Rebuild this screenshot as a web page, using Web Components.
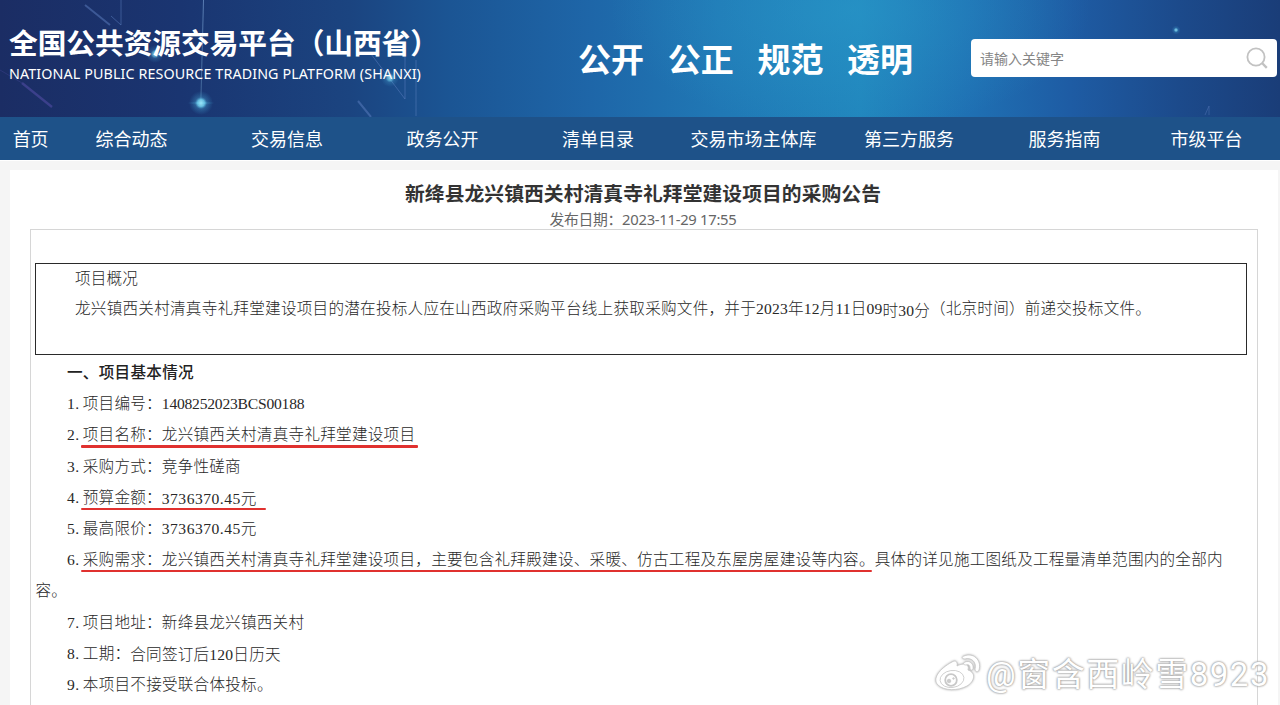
<!DOCTYPE html>
<html lang="zh-CN">
<head>
<meta charset="utf-8">
<title>全国公共资源交易平台（山西省）</title>
<style>
    body {
        margin: 0;
        width: 1280px;
        height: 705px;
        overflow: hidden;
        background: #f5f5f5;
        font-family: 'Noto Sans', 'Noto Sans CJK SC', sans-serif;
    }
</style>
</head>
<body>
<site-page>
    <site-banner slot="banner"></site-banner>
    <site-nav slot="nav"></site-nav>
    <notice-article>
        <fit-text slot="title" width="476">新绛县龙兴镇西关村清真寺礼拜堂建设项目的采购公告</fit-text>
        <fit-text slot="date" width="187">发布日期：2023-11-29 17:55</fit-text>
        <notice-line slot="summary"><fit-text width="63">项目概况</fit-text></notice-line>
        <notice-line slot="summary"><fit-text width="681">龙兴镇西关村清真寺礼拜堂建设项目的潜在投标人应在山西政府采购平台线上获取采购文件，并于</fit-text><fit-text width="126.5">2023年12月11日09</fit-text><fit-text width="47.5" drop="2">时30分</fit-text><fit-text width="221">（北京时间）前递交投标文件。</fit-text></notice-line>
        <notice-line class="head"><fit-text width="127">一、项目基本情况</fit-text></notice-line>
        <notice-line num="1."><fit-text width="79">项目编号：</fit-text><fit-text width="142.5">1408252023BCS00188</fit-text></notice-line>
        <notice-line num="2."><red-mark width="337"><fit-text width="79">项目名称：</fit-text><fit-text width="253.5">龙兴镇西关村清真寺礼拜堂建设项目</fit-text></red-mark></notice-line>
        <notice-line num="3."><fit-text width="79">采购方式：</fit-text><fit-text width="79">竞争性磋商</fit-text></notice-line>
        <notice-line num="4."><red-mark width="185"><fit-text width="79">预算金额：</fit-text><fit-text width="95" drop="1">3736370.45元</fit-text></red-mark></notice-line>
        <notice-line num="5."><fit-text width="79">最高限价：</fit-text><fit-text width="95">3736370.45元</fit-text></notice-line>
        <notice-line num="6."><red-mark width="791"><fit-text width="79">采购需求：</fit-text><fit-text width="713">龙兴镇西关村清真寺礼拜堂建设项目，主要包含礼拜殿建设、采暖、仿古工程及东屋房屋建设等内容。</fit-text></red-mark><fit-text width="348">具体的详见施工图纸及工程量清单范围内的全部内</fit-text></notice-line>
        <notice-line class="flush"><fit-text width="31.7">容。</fit-text></notice-line>
        <notice-line num="7."><fit-text width="79">项目地址：</fit-text><fit-text width="142.5">新绛县龙兴镇西关村</fit-text></notice-line>
        <notice-line num="8."><fit-text width="47.5">工期：</fit-text><fit-text width="150.5" drop="1">合同签订后120日历天</fit-text></notice-line>
        <notice-line num="9."><fit-text width="190">本项目不接受联合体投标。</fit-text></notice-line>
    </notice-article>
    <weibo-stamp slot="stamp">@窗含西岭雪8923</weibo-stamp>
</site-page>

<script>
(() => {
    const define = (name, html, setup) => {
        const template = document.createElement('template');
        template.innerHTML = html;
        customElements.define(name, class extends HTMLElement {
            constructor() {
                super();
                this.attachShadow({ mode: 'open' });
                this.shadowRoot.appendChild(template.content.cloneNode(true));
            }
            connectedCallback() {
                if (setup) setup(this, this.shadowRoot);
            }
        });
    };

    define('red-mark', `
        <style>
            :host {
                display: flex;
                position: relative;
            }
            i {
                position: absolute;
                left: -1.5px;
                bottom: 3px;
                height: 2.4px;
                border-radius: 1px;
                background: #e0312f;
            }
        </style>
        <slot></slot><i></i>`, (host, root) => {
        root.querySelector('i').style.width = host.getAttribute('width') + 'px';
    });

    define('notice-line', `
        <style>
            :host {
                display: flex;
                padding-left: 32px;
                height: 31.2px;
                line-height: 31px;
                font-family: 'Liberation Serif', 'Noto Sans CJK SC', serif;
                font-size: 15.6px;
                font-weight: 300;
                color: #282828;
            }
            :host([slot=summary]) {
                padding-left: 39px;
                height: 30px;
                line-height: 30px;
            }
            :host(.head) {
                font-weight: 500;
                color: #222;
            }
            :host(.flush) {
                padding-left: .5px;
            }
            b {
                font-weight: inherit;
                letter-spacing: .4px;
                width: 15.8px;
            }
            b:empty {
                display: none;
            }
        </style>
        <b></b><slot></slot>`, (host, root) => {
        root.querySelector('b').textContent = host.getAttribute('num') || '';
    });

    define('notice-article', `
        <style>
            :host {
                display: flex;
                flex: none;
                flex-direction: column;
                box-sizing: border-box;
                margin: 9px 2px 0 10px;
                padding: 10px 20px 0;
                height: 560px;
                background: #fff;
            }
            header {
                display: flex;
                flex-direction: column;
                align-items: center;
                height: 49px;
                padding-right: 2px;
            }
            .title {
                height: 30px;
                line-height: 28px;
                font-size: 19.8px;
                font-weight: 700;
                color: #333;
            }
            .date {
                height: 19px;
                line-height: 19px;
                font-size: 14.8px;
                color: #666;
            }
            section {
                flex: 1;
                box-sizing: border-box;
                width: 1228px;
                padding: 33px 10px 0 4px;
                border: 1px solid #d6d6d6;
            }
            .summary {
                box-sizing: border-box;
                height: 92px;
                margin-bottom: 2px;
                border: 1px solid #2a2a2a;
            }
        </style>
        <header>
            <div class="title"><slot name="title"></slot></div>
            <div class="date"><slot name="date"></slot></div>
        </header>
        <section>
            <div class="summary"><slot name="summary"></slot></div>
            <slot></slot>
        </section>`);

    define('search-box', `
        <style>
            :host {
                display: flex;
                align-items: center;
                justify-content: space-between;
                box-sizing: border-box;
                width: 306px;
                height: 38px;
                padding: 0 8px 0 9px;
                border-radius: 4px;
                background: #fff;
                font-size: 14px;
                color: #858585;
            }
        </style>
        <fit-text width="84">请输入关键字</fit-text>
        <svg width="24" height="24" viewBox="0 0 24 24" fill="none" stroke="#c2c2c2" stroke-width="1.8">
            <circle cx="11" cy="11" r="8.6"/>
            <path d="M17 17l4.8 4.8" stroke-width="2.4"/>
        </svg>`);

    define('site-banner', `
        <style>
            :host {
                display: flex;
                flex: none;
                position: relative;
                box-sizing: border-box;
                height: 117px;
                padding-left: 9px;
                overflow: hidden;
                color: #fff;
                background:
                    radial-gradient(ellipse 240px 120px at 850px 10px, rgba(42,155,203,.5), rgba(42,155,203,0)),
                    linear-gradient(90deg, #1b2d64 0, #1a3571 180px, #1b4480 350px, #1b5594 450px, #1e66a8 590px, #2078b5 720px, #2186bd 860px, #1f70b3 970px, #1e5ca4 1070px, #1c4a8b 1180px, #1a3d78 1280px);
            }
            .art {
                position: absolute;
                inset: 0;
            }
            .name, .slogan, search-box {
                position: relative;
            }
            .name {
                width: 569px;
                padding-top: 22px;
            }
            h1 {
                margin: 0;
                height: 40px;
                line-height: 41px;
                font-size: 28.7px;
                font-weight: 700;
            }
            .en {
                line-height: 22px;
                font-size: 14.3px;
            }
            .slogan {
                display: flex;
                gap: 23.7px;
                width: 393px;
                padding-top: 35px;
                line-height: 50px;
                font-size: 33px;
                font-weight: 700;
            }
            search-box {
                margin-top: 39px;
            }
        </style>
        <svg class="art" width="1280" height="117" fill="none">
            <defs>
                <radialGradient id="glow">
                    <stop offset="0" stop-color="#b5f4ff"/>
                    <stop offset=".3" stop-color="#6fd0ef" stop-opacity=".85"/>
                    <stop offset=".5" stop-color="#4aa6d4" stop-opacity=".35"/>
                    <stop offset="1" stop-color="#3a9ad0" stop-opacity="0"/>
                </radialGradient>
                <linearGradient id="beam" x2="0" y2="1">
                    <stop offset="0" stop-color="#82a9dc" stop-opacity=".6"/>
                    <stop offset="1" stop-color="#82b9dc" stop-opacity=".35"/>
                </linearGradient>
            </defs>
            <rect x="203" y="0" width="1" height="101" fill="url(#beam)" transform="rotate(1.5 203 0)"/>
            <g stroke="#5e7fc1" stroke-opacity=".5">
                <path d="M121 0v25l-10-9M405 50v49l-34-45M416 60v56"/>
                <path d="M85 5l25 20M358 101l13 16" stroke-width="2"/>
                <path d="M22 83l30 24" stroke="#5b52b0" stroke-width="2.5"/>
                <path d="M0 70l22 13" stroke="#5b52b0" stroke-opacity=".25"/>
                <path d="M1205 115l4-9v9" stroke-opacity=".4"/>
            </g>
            <circle cx="201" cy="103" r="12" fill="url(#glow)"/>
            <ellipse cx="201" cy="103" rx="14" ry="2" fill="url(#glow)" opacity=".6"/>
            <circle cx="155" cy="54" r="9" fill="url(#glow)" opacity=".75"/>
            <circle cx="390" cy="78" r="9" fill="url(#glow)" opacity=".75"/>
            <circle cx="1176" cy="30" r="4.5" fill="url(#glow)" opacity=".8"/>
        </svg>
        <div class="name">
            <h1><fit-text width="430">全国公共资源交易平台（山西省）</fit-text></h1>
            <fit-text class="en" width="412">NATIONAL PUBLIC RESOURCE TRADING PLATFORM (SHANXI)</fit-text>
        </div>
        <div class="slogan"><span>公开</span><span>公正</span><span>规范</span><span>透明</span></div>
        <search-box></search-box>`);

    const menu = ['首页', '综合动态', '交易信息', '政务公开', '清单目录', '交易市场主体库', '第三方服务', '服务指南', '市级平台'];

    define('site-nav', `
        <style>
            :host {
                display: grid;
                flex: none;
                grid-template-columns: 46.25px repeat(7, 155.5px) 128.5px;
                height: 43px;
                padding-left: 7.5px;
                background: #1e5289;
                background-clip: padding-box;
                border-bottom: 1px solid #fff;
                line-height: 44px;
                font-size: 18px;
                color: #fff;
                text-align: center;
            }
        </style>`, (host, root) => {
        menu.forEach((text) => {
            const item = document.createElement('span');
            item.textContent = text;
            root.appendChild(item);
        });
    });

    define('weibo-stamp', `
        <style>
            :host {
                display: flex;
                align-items: center;
                position: absolute;
                left: 934px;
                top: 648px;
                height: 48px;
                gap: 4px;
                font-family: Roboto, 'Noto Sans CJK SC', sans-serif;
                font-size: 33px;
                color: #fff;
            }
            svg {
                margin-top: 4px;
                filter: drop-shadow(0 0 1px #aaa);
            }
            span {
                white-space: nowrap;
                text-shadow: 0 0 2px #999, 0 0 2px #aaa, 0 0 3px #ccc;
            }
        </style>
        <svg width="48" height="42" viewBox="0 0 48 42" fill="#fff" stroke="#c8c8c8" stroke-width=".8">
            <path d="M18 9c3-2 6-1 5 4 5-3 13-3 11 4 9 3 6 12-1 16-9 5-23 5-29-1C-2 26 5 16 18 9z"/>
            <ellipse cx="18" cy="26" rx="12" ry="8.5" transform="rotate(-8 18 26)"/>
            <circle cx="17" cy="27" r="5.8" stroke-width="1.8"/>
            <circle cx="15" cy="28" r="1.8" fill="#ccc"/>
            <circle cx="19.500" cy="25.500" r=".8" fill="#ccc"/>
            <path d="M30 3c9-4 18 4 15 14-1 3-4 2-4-1 2-7-4-12-10-10-3 0-4-2-1-3z"/>
            <path d="M31 9c5-2 9 2 8 7-1 2-3 1-3-1 0-3-2-4-4-3-3 0-3-2-1-3z"/>
        </svg>
        <fit-text width="284"><span><slot></slot></span></fit-text>`);

    define('site-page', `
        <style>
            :host {
                display: flex;
                flex-direction: column;
                position: relative;
                height: 705px;
                overflow: hidden;
            }
        </style>
        <slot name="banner"></slot>
        <slot name="nav"></slot>
        <slot></slot>
        <slot name="stamp"></slot>`);

    // one run of text spread evenly over a given width;
    // comes last, as it measures with the fonts of the elements around it
    define('fit-text', `
        <style>
            :host {
                display: inline-block;
                white-space: nowrap;
                flex: none;
            }
            span {
                display: inline-block;
            }
        </style>
        <span><slot></slot></span>`, (host, root) => {
        const width = parseFloat(host.getAttribute('width'));
        const span = root.querySelector('span');
        const outer = host.getRootNode().host;
        const count = [...(host.textContent || outer.textContent)].length;
        const natural = span.getBoundingClientRect().width;
        span.style.letterSpacing = (width - natural) / count + 'px';
        // slotted text inherits from the place it was written in
        if (!host.textContent) outer.style.letterSpacing = span.style.letterSpacing;
        host.style.width = width + 'px';
        if (host.hasAttribute('drop')) {
            host.style.transform = `translateY(${host.getAttribute('drop')}px)`;
        }
    });
})();
</script>
</body>
</html>
